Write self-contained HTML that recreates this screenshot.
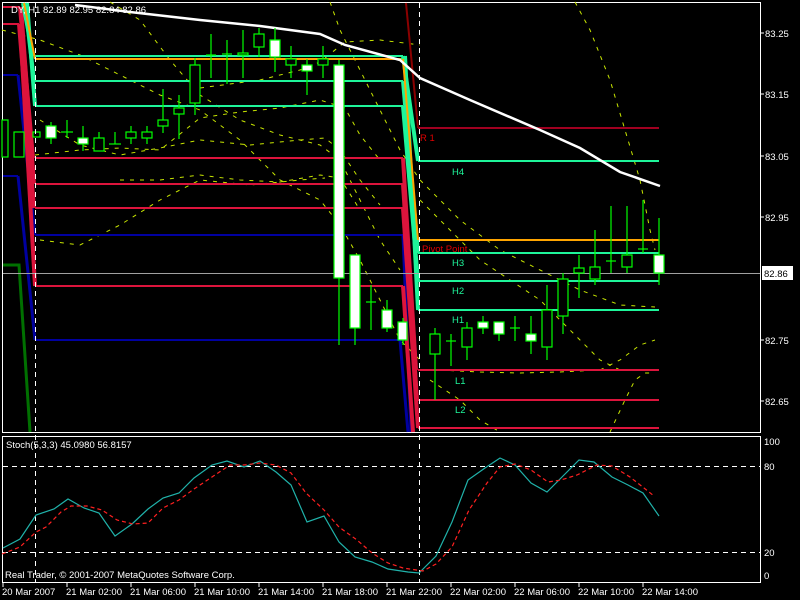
<!DOCTYPE html>
<html><head><meta charset="utf-8"><style>
html,body{margin:0;padding:0;background:#000;width:800px;height:600px;overflow:hidden}
svg{display:block}
text{font-family:"Liberation Sans",sans-serif;font-size:9.5px}
</style></head><body>
<svg width="800" height="600" viewBox="0 0 800 600">
<rect width="800" height="600" fill="#000"/>
<rect x="2.5" y="2.5" width="758" height="430" fill="none" stroke="#fff"/>
<rect x="2.5" y="436.5" width="758" height="146" fill="none" stroke="#fff"/>
<g fill="none" stroke="#c8e600" stroke-width="1" stroke-dasharray="4,6">
<polyline points="2,30 40,40 80,55 120,75 160,95 200,110 240,140 280,180 320,200 340,225 360,260 380,300 400,340 420,360"/>
<polyline points="110,2 140,20 170,60 200,95 240,120 280,135 320,145 340,160 360,200 380,240 400,270"/>
<polyline points="35,155 80,150 120,148 160,150 200,118 240,112 280,108 320,100 345,108 360,135 380,160"/>
<polyline points="40,120 80,145 120,155 160,148 200,140 250,145 300,140 325,138 340,150 360,180 380,205"/>
<polyline points="200,88 260,80 300,70 320,62 345,42 380,40 420,45"/>
<polyline points="330,2 340,30 360,70 380,110 400,150 420,180 460,220 500,250 540,270 580,290 620,305 655,307"/>
<polyline points="420,200 450,230 480,260 510,280 540,300 560,320 580,340 600,360 620,370 655,370"/>
<polyline points="430,380 460,400 480,420 500,432"/>
<polyline points="440,370 480,372 520,373 560,372 600,370 620,360 640,345 655,340"/>
<polyline points="610,432 625,400 635,380 645,373 655,373"/>
<polyline points="575,2 590,30 610,80 625,130 640,180 650,230 655,250"/>
<polyline points="120,180 160,180 200,175 240,180 280,182 320,175 340,178 360,210"/>
<polyline points="40,240 80,245 120,225 160,200 200,180 250,185 300,180 325,178"/>
</g>
<g stroke-width="2" fill="none">
<line x1="35" y1="56" x2="403" y2="56" stroke="#1ef59a"/>
<line x1="35" y1="59" x2="403" y2="59" stroke="#ffa500"/>
<line x1="35" y1="81" x2="403" y2="81" stroke="#1ef59a"/>
<line x1="35" y1="106" x2="403" y2="106" stroke="#1ef59a"/>
<line x1="35" y1="158" x2="403" y2="158" stroke="#dc143c"/>
<line x1="35" y1="184" x2="403" y2="184" stroke="#dc143c"/>
<line x1="35" y1="208" x2="403" y2="208" stroke="#dc143c"/>
<line x1="35" y1="235" x2="403" y2="235" stroke="#0000a0"/>
<line x1="35" y1="286" x2="403" y2="286" stroke="#dc143c"/>
<line x1="35" y1="340" x2="403" y2="340" stroke="#0000a0"/>
<line x1="3" y1="7" x2="20" y2="7" stroke="#dc143c"/>
<line x1="3" y1="24" x2="19" y2="24" stroke="#dc143c"/>
<line x1="3" y1="75" x2="18" y2="75" stroke="#0000a0"/>
<line x1="3" y1="176" x2="18" y2="176" stroke="#0000a0"/>
<line x1="3" y1="265" x2="19" y2="265" stroke="#007000"/>
<line x1="418" y1="128" x2="659" y2="128" stroke="#a00020"/>
<line x1="418" y1="161" x2="659" y2="161" stroke="#1ef59a"/>
<line x1="418" y1="240" x2="659" y2="240" stroke="#ffa500"/>
<line x1="418" y1="253" x2="659" y2="253" stroke="#1ef59a"/>
<line x1="418" y1="281" x2="659" y2="281" stroke="#1ef59a"/>
<line x1="418" y1="310" x2="659" y2="310" stroke="#1ef59a"/>
<line x1="418" y1="370" x2="659" y2="370" stroke="#dc143c"/>
<line x1="418" y1="400" x2="659" y2="400" stroke="#dc143c"/>
<line x1="418" y1="428" x2="659" y2="428" stroke="#dc143c"/>
</g>
<g fill="none" stroke-width="4">
<polyline points="3,265 19,265 30,432" stroke="#007000" stroke-width="3"/>
<polyline points="18,75 35,235" stroke="#0000a0" stroke-width="3"/>
<polyline points="18,176 35,340" stroke="#0000a0" stroke-width="3"/>
<polyline points="20,7 33,158" stroke="#dc143c"/>
<polyline points="21,7 34,184" stroke="#dc143c"/>
<polyline points="19,24 34,208" stroke="#dc143c"/>
<polyline points="20,24 35,286" stroke="#dc143c"/>
<polyline points="23,3 33,56" stroke="#1ef59a"/>
<polyline points="25,3 34,81" stroke="#1ef59a"/>
<polyline points="27,3 35,106" stroke="#1ef59a"/>
<polyline points="24,3 35,59" stroke="#ffa500" stroke-width="2"/>
</g>
<g fill="none" stroke-width="4">
<polyline points="403,235 411,432" stroke="#0000a0" stroke-width="3"/>
<polyline points="400,340 408,432" stroke="#0000a0" stroke-width="3"/>
<polyline points="403,286 413,432" stroke="#dc143c"/>
<polyline points="403,158 416,370" stroke="#dc143c"/>
<polyline points="403,184 417,400" stroke="#dc143c"/>
<polyline points="403,208 418,428" stroke="#dc143c"/>
<polyline points="403,56 418,161" stroke="#1ef59a"/>
<polyline points="403,81 418,253" stroke="#1ef59a"/>
<polyline points="403,106 418,281" stroke="#1ef59a"/>
<polyline points="405,56 418,310" stroke="#1ef59a"/>
<polyline points="403,59 418,240" stroke="#ffa500" stroke-width="2"/>
<polyline points="406,3 418,128" stroke="#8b0000" stroke-width="2"/>
</g>
<line x1="3" y1="273.5" x2="760" y2="273.5" stroke="#a0a0a0" stroke-width="1"/>
<polyline points="75,5 130,12 200,20 260,26 320,34 345,45 400,60 420,78 470,100 540,130 580,148 620,172 660,186" fill="none" stroke="#fff" stroke-width="2.5"/>
<g stroke="#00ff00" stroke-width="1.2" fill="none">
<line x1="51" y1="122" x2="51" y2="144"/><rect x="46" y="126" width="10" height="12" fill="#fff"/>
<line x1="67" y1="120" x2="67" y2="138"/><line x1="61" y1="132" x2="73" y2="132"/>
<line x1="83" y1="126" x2="83" y2="151"/><rect x="78" y="138" width="10" height="6" fill="#fff"/>
<line x1="99" y1="132" x2="99" y2="151"/><rect x="94" y="138" width="10" height="13" fill="#000"/>
<line x1="115" y1="132" x2="115" y2="144"/><line x1="109" y1="144" x2="121" y2="144"/>
<line x1="131" y1="126" x2="131" y2="144"/><rect x="126" y="132" width="10" height="6" fill="#000"/>
<line x1="147" y1="126" x2="147" y2="144"/><rect x="142" y="132" width="10" height="6" fill="#000"/>
<line x1="163" y1="89" x2="163" y2="133"/><rect x="158" y="120" width="10" height="6" fill="#000"/>
<line x1="179" y1="95" x2="179" y2="139"/><rect x="174" y="108" width="10" height="6" fill="#000"/>
<line x1="195" y1="58" x2="195" y2="115"/><rect x="190" y="65" width="10" height="38" fill="#000"/>
<rect x="2" y="120" width="6" height="37" fill="#000"/><rect x="14" y="132" width="10" height="25" fill="#000"/>
<rect x="33" y="132" width="7" height="5" fill="#000"/>
<line x1="211" y1="34" x2="211" y2="78"/><line x1="206" y1="55" x2="216" y2="55"/>
<line x1="227" y1="40" x2="227" y2="84"/><line x1="222" y1="54" x2="232" y2="54"/>
<line x1="243" y1="30" x2="243" y2="78"/><rect x="238" y="53" width="10" height="2" fill="#000"/>
<line x1="259" y1="28" x2="259" y2="57"/><rect x="254" y="34" width="10" height="13" fill="#000"/>
<line x1="275" y1="28" x2="275" y2="72"/><rect x="270" y="40" width="10" height="17" fill="#fff"/>
<line x1="291" y1="46" x2="291" y2="78"/><rect x="286" y="59" width="10" height="6" fill="#000"/>
<line x1="307" y1="59" x2="307" y2="95"/><rect x="302" y="65" width="10" height="6" fill="#fff"/>
<line x1="323" y1="46" x2="323" y2="78"/><rect x="318" y="59" width="10" height="6" fill="#000"/>
<line x1="339" y1="60" x2="339" y2="345"/><rect x="334" y="65" width="10" height="213" fill="#fff"/>
<line x1="355" y1="255" x2="355" y2="345"/><rect x="350" y="255" width="10" height="73" fill="#fff"/>
<line x1="371" y1="285" x2="371" y2="330"/><line x1="366" y1="302" x2="376" y2="302"/>
<line x1="387" y1="300" x2="387" y2="332"/><rect x="382" y="310" width="10" height="18" fill="#fff"/>
<line x1="403" y1="318" x2="403" y2="345"/><rect x="398" y="322" width="9" height="18" fill="#fff"/>
<line x1="435" y1="328" x2="435" y2="400"/><rect x="430" y="334" width="10" height="20" fill="#000"/>
<line x1="451" y1="334" x2="451" y2="366"/><line x1="446" y1="341" x2="456" y2="341"/>
<line x1="467" y1="322" x2="467" y2="360"/><rect x="462" y="328" width="10" height="19" fill="#000"/>
<line x1="483" y1="316" x2="483" y2="334"/><rect x="478" y="322" width="10" height="6" fill="#fff"/>
<line x1="499" y1="322" x2="499" y2="341"/><rect x="494" y="322" width="10" height="12" fill="#fff"/>
<line x1="515" y1="316" x2="515" y2="341"/><line x1="510" y1="328" x2="520" y2="328"/>
<line x1="531" y1="316" x2="531" y2="354"/><rect x="526" y="334" width="10" height="7" fill="#fff"/>
<line x1="547" y1="285" x2="547" y2="360"/><rect x="542" y="310" width="10" height="37" fill="#000"/>
<line x1="563" y1="273" x2="563" y2="334"/><rect x="558" y="279" width="10" height="37" fill="#000"/>
<line x1="579" y1="255" x2="579" y2="298"/><rect x="574" y="268" width="10" height="5" fill="#000"/>
<line x1="595" y1="230" x2="595" y2="285"/><rect x="590" y="267" width="10" height="12" fill="#000"/>
<line x1="611" y1="206" x2="611" y2="273"/><line x1="606" y1="261" x2="616" y2="261"/>
<line x1="627" y1="206" x2="627" y2="273"/><rect x="622" y="255" width="10" height="12" fill="#000"/>
<line x1="643" y1="200" x2="643" y2="253"/><line x1="638" y1="249" x2="648" y2="249"/>
<line x1="659" y1="218" x2="659" y2="285"/><rect x="654" y="255" width="10" height="18" fill="#fff"/>
</g>
<g fill="#1ef59a">
<text x="452" y="175">H4</text><text x="452" y="266">H3</text><text x="452" y="294">H2</text>
<text x="452" y="323">H1</text><text x="455" y="384">L1</text><text x="455" y="413">L2</text>
</g>
<text x="420" y="141" fill="#e00000" font-size="11">R 1</text>
<text x="422" y="252" fill="#e00000" font-size="11">Pivot Point</text>
<text x="11" y="13" fill="#fff">DY, H1  82.89 82.95 82.84 82.86</text>
<g stroke="#fff" stroke-dasharray="5,4" stroke-width="1">
<line x1="35.5" y1="3" x2="35.5" y2="582"/><line x1="419.5" y1="3" x2="419.5" y2="582"/>
<line x1="3" y1="466.5" x2="760" y2="466.5"/><line x1="3" y1="552.5" x2="760" y2="552.5"/>
</g>
<g fill="#fff">
<text x="765" y="37">83.25</text><text x="765" y="98">83.15</text><text x="765" y="160">83.05</text>
<text x="765" y="221">82.95</text><text x="765" y="344">82.75</text><text x="765" y="405">82.65</text>
<text x="764" y="445">100</text><text x="764" y="470">80</text><text x="764" y="556">20</text><text x="764" y="579">0</text>
</g>
<g stroke="#fff"><line x1="761" y1="33" x2="764" y2="33"/><line x1="761" y1="94" x2="764" y2="94"/><line x1="761" y1="156" x2="764" y2="156"/><line x1="761" y1="217" x2="764" y2="217"/><line x1="761" y1="340" x2="764" y2="340"/><line x1="761" y1="401" x2="764" y2="401"/></g>
<rect x="762" y="266" width="31" height="14" fill="#fff"/>
<text x="764" y="277" fill="#000">82.86</text>
<text x="6" y="448" fill="#fff">Stoch(5,3,3) 45.0980 56.8157</text>
<polyline fill="none" stroke="#20b2aa" stroke-width="1.2" points="3,548 20,539 36,515 54,509 68,499 84,508 99,513 115,536 132,524 148,509 163,498 179,493 194,478 212,465 227,461 244,467 260,461 276,472 291,485 307,522 324,516 339,542 355,557 372,562 388,569 408,572 419,573 436,556 452,522 468,480 485,468 500,458 515,465 531,483 547,492 564,475 579,460 594,462 612,477 628,485 643,493 659,516"/>
<polyline fill="none" stroke="#ff2020" stroke-width="1.2" stroke-dasharray="4,3" points="2,554 20,547 36,532 46,527 61,512 71,506 87,506 102,510 117,520 133,524 148,523 163,508 179,500 194,489 212,477 230,465 244,465 260,463 276,465 291,473 306,493 324,510 339,527 357,540 372,553 388,563 403,568 423,571 436,564 452,547 469,510 487,483 500,467 515,464 531,470 548,482 561,480 577,475 597,465 612,466 630,477 644,488 654,496"/>
<text x="5" y="578" fill="#fff">Real Trader, © 2001-2007 MetaQuotes Software Corp.</text>
<g stroke="#fff"><line x1="3" y1="583" x2="3" y2="587"/><line x1="67" y1="583" x2="67" y2="587"/><line x1="131" y1="583" x2="131" y2="587"/><line x1="195" y1="583" x2="195" y2="587"/><line x1="259" y1="583" x2="259" y2="587"/><line x1="323" y1="583" x2="323" y2="587"/><line x1="387" y1="583" x2="387" y2="587"/><line x1="451" y1="583" x2="451" y2="587"/><line x1="515" y1="583" x2="515" y2="587"/><line x1="579" y1="583" x2="579" y2="587"/><line x1="643" y1="583" x2="643" y2="587"/></g>
<g fill="#fff">
<text x="2" y="595">20 Mar 2007</text><text x="66" y="595">21 Mar 02:00</text><text x="130" y="595">21 Mar 06:00</text>
<text x="194" y="595">21 Mar 10:00</text><text x="258" y="595">21 Mar 14:00</text><text x="322" y="595">21 Mar 18:00</text>
<text x="386" y="595">21 Mar 22:00</text><text x="450" y="595">22 Mar 02:00</text><text x="514" y="595">22 Mar 06:00</text>
<text x="578" y="595">22 Mar 10:00</text><text x="642" y="595">22 Mar 14:00</text>
</g>
</svg>
</body></html>
